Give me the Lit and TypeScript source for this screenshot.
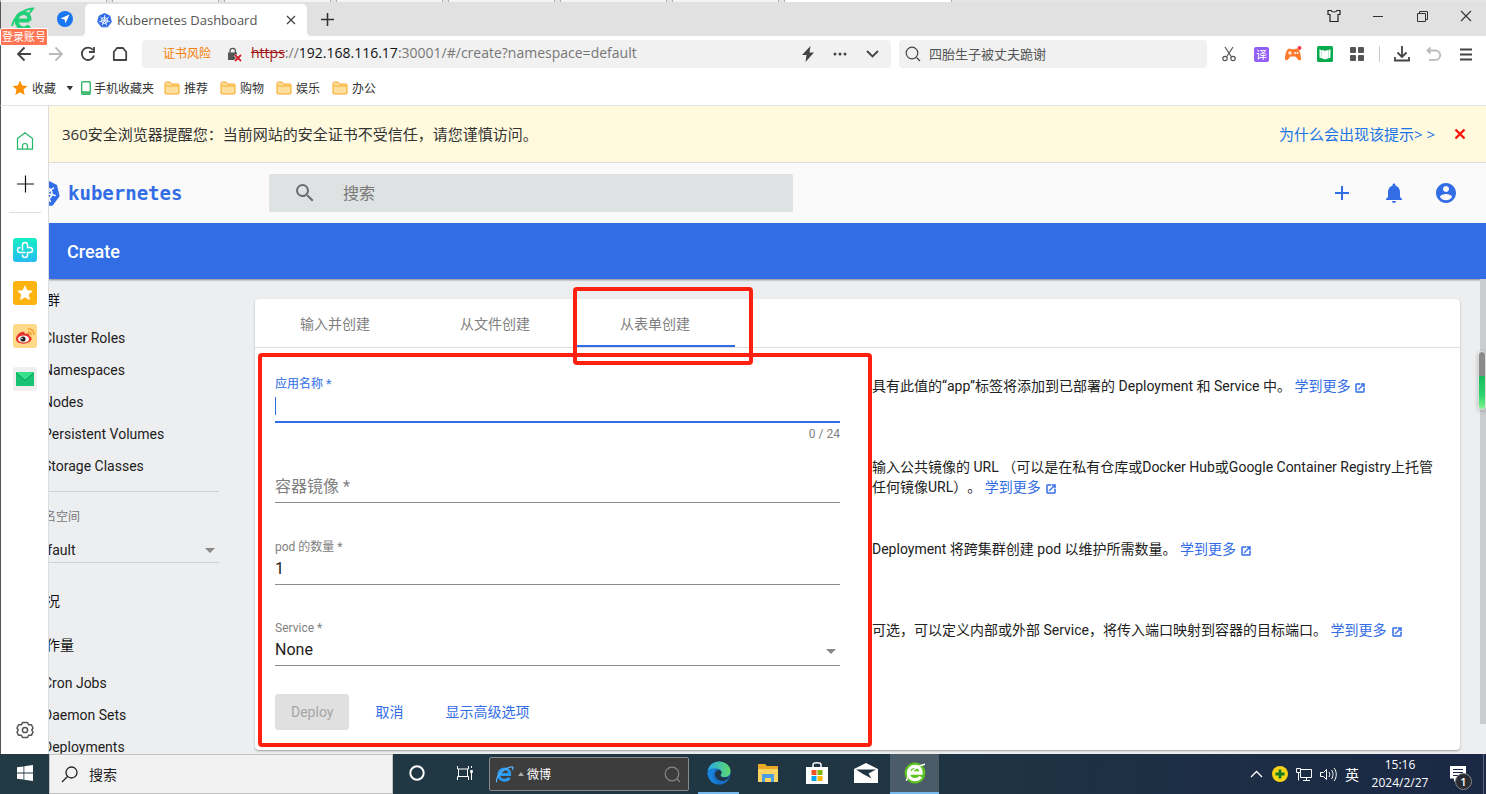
import { LitElement, html, css, svg } from "lit";
import { customElement, state } from "lit/decorators.js";
import { classMap } from "lit/directives/class-map.js";

const launchIcon = html`<svg class="launch" viewBox="2 2 20 20" width="10" height="10" fill="currentColor" stroke="currentColor" aria-hidden="true"><path d="M19 19H5V5h7V3H5a2 2 0 0 0-2 2v14a2 2 0 0 0 2 2h14c1.100 0 2-.9 2-2v-7h-2v7zM14 3v2h3.590l-9.830 9.830 1.410 1.410L19 6.410V10h2V3h-7z"/></svg>`;

const wheel = (body: string, line: string) => svg`
  <path fill=${body} d="M16 1 L27.500 6.500 L30.500 19 L22.500 29.500 H9.500 L1.500 19 L4.500 6.500 Z" stroke=${body} stroke-width="2" stroke-linejoin="round"/>
  <g fill="none" stroke=${line} stroke-width="1.800" stroke-linecap="round">
    <circle cx="16" cy="16" r="6.500"/><circle cx="16" cy="16" r="1.600"/>
    ${[0, 1, 2, 3, 4, 5, 6].map((i) => svg`<path d="M16 13.500V5.500" transform="rotate(${(i * 360) / 7} 16 16)"/>`)}
  </g>`;

const folder = html`<svg width="16" height="14" viewBox="0 0 16 14" aria-hidden="true"><path d="M1 2.500C1 1.500 1.500 1 2.500 1H6l1.500 2h6.500c.7 0 1 .4 1 1v8c0 .7-.3 1-1 1H2c-.7 0-1-.3-1-1z" fill="#ffdf9e" stroke="#f5a623"/><path d="M1.500 5h13" stroke="#f5a623"/></svg>`;

@customElement("browser-chrome")
class BrowserChrome extends LitElement {
  static styles = css`
    :host { display: block; flex: none; background: #fff; font-family: "Open Sans", "Noto Sans CJK SC", sans-serif; color: #333; }
    * { box-sizing: border-box; }
    button { border: 0; background: none; padding: 0; margin: 0; font: inherit; color: inherit; display: flex; align-items: center; justify-content: center; }
    svg { display: block; flex: none; }
    .behind { height: 2px; display: flex; gap: 5px; background: #e6e6e6; }
    .behind span { width: 107px; background: #f3f3f3; border: solid #aaa; border-width: 0 1px; }
    .behind .front { width: 168px; background: #fff; }
    .tabs { height: 34px; background: #e1e1e1; border-left: 1px solid #555; display: flex; position: relative; }
    .brand { width: 84px; display: flex; align-items: center; gap: 22px; padding-left: 10px; }
    .login { position: absolute; left: 0; top: 27px; z-index: 2; height: 16px; padding: 0 1px; background: #ff7452; border-radius: 1px; box-shadow: 0 0 0 1px #fff; color: #fff; font-size: 11px; line-height: 16px; }
    .tab { position: relative; width: 222px; margin-top: 2px; background: #fff; border-radius: 5px 5px 0 0; display: flex; align-items: center; padding: 0 11px 0 12px; gap: 5px; font-size: 13px; color: #555; }
    .tab::before, .tab::after { content: ""; position: absolute; bottom: 0; width: 4px; height: 4px; }
    .tab::before { left: -4px; background: radial-gradient(circle at 0 0, transparent 4px, #fff 4px); }
    .tab::after { right: -4px; background: radial-gradient(circle at 100% 0, transparent 4px, #fff 4px); }
    .tab .title { flex: 1; white-space: nowrap; }
    .plus { width: 40px; }
    .win { margin-left: auto; display: flex; height: 28px; margin-right: -2px; }
    .win button { width: 44px; }
    .bar { height: 36px; border-left: 1px solid #555; display: flex; align-items: center; padding-right: 4px; }
    .nav { display: flex; padding-left: 7px; width: 141px; }
    .nav button, .tools button { width: 32px; height: 28px; }
    .address { flex: 725 1 0; height: 28px; background: #f1f1f1; border-radius: 4px; display: flex; align-items: center; padding: 0 3px 0 21px; }
    .risk { font-size: 12px; line-height: 16px; padding-bottom: 1px; color: #f57c00; margin-right: 16px; }
    .url { font-size: 14px; color: #777; margin-left: 9px; flex: 1; white-space: nowrap; line-height: 18px; padding-bottom: 2px; }
    .url .bad { color: #a11212; text-decoration: line-through; }
    .url .host { color: #111; }
    .address button { width: 32px; height: 28px; }
    .find { flex: 302 1 0; margin-left: 8px; height: 28px; background: #f1f1f1; border-radius: 4px; display: flex; align-items: center; padding-left: 6px; gap: 8px; }
    .find input { border: 0; background: none; outline: 0; padding: 0 0 2px; flex: 1; min-width: 0; font: 13px "Open Sans", "Noto Sans CJK SC", sans-serif; color: #555; }
    .tools { display: flex; align-items: center; margin-left: 6px; }
    .sep { width: 1px; height: 16px; background: #ccc; margin: 0 6px; }
    .marks { height: 34px; border-left: 1px solid #555; border-bottom: 1px solid #e4e4e4; display: flex; align-items: center; padding: 0 0 1px 11px; font-size: 12px; color: #333; }
    .marks button { gap: 4px; }
    .marks .phone { gap: 3px; margin-left: 5px; margin-right: 10px; }
    .marks .dir { margin-right: 12px; }
    .marks .caret { margin-left: 6px; }
  `;

  private readonly folders = ["推荐", "购物", "娱乐", "办公"];

  render() {
    return html`
      <div class="behind">${[1, 2, 3, 4, 5, 6, 7].map(() => html`<span></span>`)}<span class="front"></span></div>
      <div class="tabs">
        <div class="brand">
          <svg width="24" height="24" viewBox="0 0 24 24"><path d="M6 13.500h12.500M18.500 13.500c.3-4.500-2-7.500-6-7.500S5.500 9.500 5.500 13.500s3 8 7 8c2.500 0 4.500-1 5.500-3" fill="none" stroke="#21cf77" stroke-width="4"/><path d="M1 19C3 10 12 2 22 1.500c-2 3-3 4.500-5 6" fill="none" stroke="#21cf77" stroke-width="2"/></svg>
          <svg width="16" height="16" viewBox="0 0 16 16"><circle cx="8" cy="8" r="8" fill="#1976f2"/><path d="M12.500 3.500 3.500 7.500l4 1 1 4z" fill="#fff"/></svg>
        </div>
        <button class="login">登录账号</button>
        <div class="tab">
          <svg width="15" height="15" viewBox="0 0 32 32">${wheel("#326ce5", "#fff")}</svg>
          <span class="title">Kubernetes Dashboard</span>
          <button aria-label="关闭标签"><svg width="10" height="10" viewBox="0 0 10 10"><path d="M1 1l8 8M9 1l-8 8" stroke="#444" stroke-width="1.300"/></svg></button>
        </div>
        <button class="plus" aria-label="新标签"><svg width="13" height="13" viewBox="0 0 13 13"><path d="M6.500 0v13M0 6.500h13" stroke="#333" stroke-width="1.600"/></svg></button>
        <div class="win">
          <button aria-label="皮肤"><svg width="14" height="14" viewBox="0 0 14 14"><path d="M4 1.500H1v4h2v7h8v-7h2v-4h-3C9 3.500 5 3.500 4 1.500z" fill="none" stroke="#222" stroke-width="1.200"/></svg></button>
          <button aria-label="最小化"><svg width="10" height="10"><path d="M0 5.500h10" stroke="#333"/></svg></button>
          <button aria-label="还原"><svg width="11" height="11" fill="none" stroke="#333"><path d="M.5 2.500h8v8h-8zM2.500 2.500v-2h8v8h-2"/></svg></button>
          <button aria-label="关闭"><svg width="12" height="12"><path d="M1 1l10 10M11 1 1 11" stroke="#333" stroke-width="1.100"/></svg></button>
        </div>
      </div>

      <div class="bar">
        <div class="nav">
          <button aria-label="后退"><svg width="16" height="16" fill="none" stroke="#444" stroke-width="1.800"><path d="M15 8H2M8.500 1.500 2 8l6.500 6.500"/></svg></button>
          <button aria-label="前进"><svg width="16" height="16" fill="none" stroke="#bbb" stroke-width="1.800"><path d="M1 8h13M7.500 1.500 14 8l-6.500 6.500"/></svg></button>
          <button aria-label="刷新"><svg width="16" height="16" fill="none" stroke="#444" stroke-width="1.800"><path d="M14 9.500A6.200 6.200 0 1 1 13 4M14 1v5H9"/></svg></button>
          <button aria-label="主页"><svg width="16" height="16" fill="none" stroke="#444" stroke-width="1.800"><path d="M1.800 6 5 2h6l3.200 4v8H1.800z" stroke-linejoin="round"/></svg></button>
        </div>
        <div class="address">
          <span class="risk">证书风险</span>
          <svg width="15" height="15" viewBox="0 0 15 15"><rect x="1" y="5.500" width="9" height="7.500" fill="#555"/><path d="M3 6V4a2.700 2.700 0 0 1 5.400 0v2" fill="none" stroke="#555" stroke-width="1.300"/><path d="M8 8l6 6M14 8l-6 6" stroke="#fff" stroke-width="3"/><path d="M8 8l6 6M14 8l-6 6" stroke="#d0202a" stroke-width="1.800"/></svg>
          <span class="url"><span class="bad">https</span>://<span class="host">192.168.116.17</span>:30001/#/create?namespace=default</span>
          <button aria-label="极速模式"><svg width="12" height="16" viewBox="0 0 12 16"><path d="M8.500 0 0 9h4.500L3.500 16 12 6.500H7.500z" fill="#444"/></svg></button>
          <button aria-label="更多"><svg width="14" height="4" fill="#444"><circle cx="2" cy="2" r="1.500"/><circle cx="7" cy="2" r="1.500"/><circle cx="12" cy="2" r="1.500"/></svg></button>
          <button aria-label="展开"><svg width="13" height="8" fill="none" stroke="#444" stroke-width="1.900"><path d="M1 1l5.500 5.500L12 1"/></svg></button>
        </div>
        <label class="find">
          <svg width="16" height="16" fill="none" stroke="#444" stroke-width="1.200"><circle cx="7" cy="7" r="5.800"/><path d="M11.500 11.500 15 15"/></svg>
          <input aria-label="网页搜索" value="四胎生子被丈夫跪谢">
        </label>
        <div class="tools">
          <button aria-label="截图"><svg width="14" height="16" fill="none" stroke="#555" stroke-width="1.200"><path d="M3 1l6.500 10M11 1 4.500 11"/><circle cx="3" cy="12.500" r="2.200"/><circle cx="11" cy="12.500" r="2.200"/></svg></button>
          <button aria-label="翻译"><svg width="15" height="15"><rect width="15" height="15" rx="2" fill="#9360f7"/><text x="2" y="12" font-size="11" fill="#fff">译</text></svg></button>
          <button aria-label="游戏"><svg width="18" height="16"><path d="M4 3c1.500-1.200 2.500-.3 3 .2h4c.5-.5 1.500-1.400 3-.2 1.800 1.500 3 6 3 10 0 2-2.500 1.500-3.500 0-1-1.600-1.500-2.500-2.500-2.500H7c-1 0-1.500 1-2.500 2.500C3.500 14.500 1 15 1 13 1 9 2.200 4.500 4 3z" fill="#ff7a2b"/><path d="M6 5v4M4 7h4" stroke="#fff" stroke-width="1.200"/><circle cx="11" cy="7" r="1" fill="#fff"/><circle cx="13.500" cy="7" r="1" fill="#fff"/><circle cx="15.500" cy="2" r="2" fill="#f43a4a"/></svg></button>
          <button aria-label="小说"><svg width="16" height="16"><rect width="16" height="16" rx="1.500" fill="#06a94d"/><path d="M2.500 3l2 1.500L6 4l2 1 2-1 1.500.5 2-1.500v8.500L8 13.500l-5.500-2z" fill="#fff"/><path d="M4.500 4.500v7M11.500 4.500v7" stroke="#b8ead0"/></svg></button>
          <button aria-label="应用"><svg width="14" height="14" fill="#555"><rect width="6" height="6" rx="1"/><rect x="8" width="6" height="6" rx="1"/><rect y="8" width="6" height="6" rx="1"/><rect x="8" y="8" width="6" height="6" rx="1"/></svg></button>
          <span class="sep"></span>
          <button aria-label="下载"><svg width="16" height="16" fill="none" stroke="#444" stroke-width="1.800"><path d="M8 0v11M3.500 6.500 8 11l4.500-4.500M1 11v3.500h14V11"/></svg></button>
          <button aria-label="撤销"><svg width="16" height="16" fill="none" stroke="#bbb" stroke-width="1.800"><path d="M4.500 1.500 1.500 4.500l3 3M1.500 4.500h8a4.700 4.700 0 0 1 0 9.400H3"/></svg></button>
          <button aria-label="菜单"><svg width="12" height="13" stroke="#444" stroke-width="1.800"><path d="M0 1.500h12M0 6.500h12M0 11.500h12"/></svg></button>
        </div>
      </div>

      <div class="marks">
        <button><svg width="16" height="16" viewBox="0 0 16 16"><path d="M8 .5l2.200 5 5.300.5-4 3.600 1.200 5.400L8 12.200 3.300 15l1.200-5.400-4-3.600 5.300-.5z" fill="#ff9100"/></svg>收藏</button>
        <button class="caret" aria-label="收藏菜单"><svg width="14" height="5"><path d="M4.500 0h6.500L8 4.500z" fill="#333"/></svg></button>
        <button class="phone"><svg width="10" height="14"><rect x=".7" y=".7" width="8.600" height="12.600" rx="1" fill="#fff" stroke="#39b86b" stroke-width="1.400"/><path d="M1 11.500h8" stroke="#39b86b" stroke-width="2.500"/></svg>手机收藏夹</button>
        ${this.folders.map((f) => html`<button class="dir">${folder}${f}</button>`)}
      </div>
    `;
  }
}

@customElement("side-rail")
class SideRail extends LitElement {
  static styles = css`
    :host { flex: none; display: flex; flex-direction: column; align-items: center; width: 49px; box-sizing: border-box; background: #fff; border-left: 1px solid #555; border-right: 1px solid #dcdcdc; padding: 23px 0 12px; }
    button { border: 0; background: none; padding: 0; margin: 0 0 19px; width: 24px; height: 24px; }
    svg { display: block; }
    hr { width: 32px; border: 0; border-top: 1px solid #ddd; margin: -3px 0 25px; }
    .gear { margin: auto 0 0; }
  `;
  render() {
    return html`
      <button aria-label="主页"><svg width="24" height="24" fill="none" stroke="#21b866" stroke-width="1.200"><path d="M4.500 9.500 12 3.800l7.500 5.700v10.700h-15zM9.500 20v-3a2.500 2.500 0 0 1 5 0v3"/></svg></button>
      <button aria-label="添加"><svg width="24" height="24" stroke="#111" stroke-width="1.200"><path d="M12.500 3.500v17M4 12h17"/></svg></button>
      <hr>
      <button aria-label="健康"><svg width="24" height="24"><defs><linearGradient id="g" x2="0" y2="1"><stop stop-color="#15eec4"/><stop offset="1" stop-color="#25bdf0"/></linearGradient></defs><rect width="24" height="24" rx="3" fill="url(#g)"/><path d="M9.500 12.500V7a2.500 2.500 0 0 1 5 0v2.500H17a2.500 2.500 0 0 1 0 5h-2.500V17a2.500 2.500 0 0 1-5 0v-.5M12.500 14.500H7a2.500 2.500 0 0 1 0-5h.5" fill="none" stroke="#fff" stroke-width="1.500"/></svg></button>
      <button aria-label="收藏"><svg width="24" height="24"><rect width="24" height="24" rx="3" fill="#ffb30f"/><path d="M12 4l2.300 5.300 5.700.5-4.300 3.800 1.300 5.700-5-3-5 3 1.300-5.700L4 9.800l5.700-.5z" fill="#fff"/></svg></button>
      <button aria-label="微博"><svg width="24" height="24"><rect width="24" height="24" rx="3" fill="#ffd98a"/><path d="M3 15c0-4 5-8.500 8-7 1 .5.800 1.500.8 2 3-1 5.200-.2 4.400 2 2.500.8 3 2.500 2 4.200C15 21 3 21 3 15z" fill="#e6322b"/><ellipse cx="10.500" cy="15" rx="5.500" ry="3.600" fill="#fff"/><circle cx="10" cy="15" r="2.600" fill="#222"/><circle cx="9" cy="14.500" r=".8" fill="#fff"/><path d="M15 8.200c2-.3 3.300 1 3 3M15 5c4-.5 6.500 2.500 5.800 6" fill="none" stroke="#f5a02c" stroke-width="1.600"/></svg></button>
      <button aria-label="邮件"><svg width="24" height="24"><rect width="24" height="24" rx="3" fill="#efefef"/><rect x="3" y="5" width="18" height="14" fill="#17c272"/><path d="M3 5h18l-9 8z" fill="#37e08a"/><path d="M3 6l9 7.500L21 6" fill="none" stroke="#0b9a57"/></svg></button>
      <button class="gear" aria-label="设置"><svg width="24" height="24" fill="none" stroke="#555" stroke-width="1.500"><path d="M9.500 4.500h5l1.200 2.300h2.800L20 10l-1.200 2 1.200 2.200-1.500 3h-2.800l-1.200 2.300h-5l-1.200-2.300H5.500l-1.500-3L5.200 12 4 10l1.500-3.200h2.800z" stroke-linejoin="round"/><circle cx="12" cy="12" r="2.600"/></svg></button>
    `;
  }
}

@customElement("kube-dashboard")
class KubeDashboard extends LitElement {
  static styles = css`
    :host { flex: 1; min-width: 0; display: flex; flex-direction: column; overflow: hidden; background: #edeef0; font-family: Roboto, "Noto Sans CJK SC", sans-serif; font-size: 14px; color: #212121; }
    * { box-sizing: border-box; }
    button { border: 0; background: none; padding: 0; margin: 0; font: inherit; color: inherit; }
    svg { display: block; flex: none; }
    a { color: #326de6; text-decoration: none; }
    .warning { flex: none; height: 57px; background: #fff9dd; border-bottom: 1px solid #dcdcdc; display: flex; align-items: center; padding: 0 20px 0 13px; font: 15px "Open Sans", "Noto Sans CJK SC", sans-serif; color: #333; }
    .warning span, .warning a { padding-bottom: 2px; }
    .warning a { margin-left: auto; margin-right: 19px; color: #1a73e8; }
    header { flex: none; height: 60px; background: #fafafa; display: flex; align-items: center; padding-right: 28px; color: #326de6; }
    .logo { width: 220px; display: flex; align-items: center; gap: 8px; font: bold 19px "DejaVu Sans Mono", monospace; }
    .logo svg { margin-left: -16px; }
    .search { width: 524px; height: 38px; background: #dfe2e3; display: flex; align-items: center; gap: 26px; padding-left: 24px; color: #6a6d70; border-radius: 2px; }
    .search input { border: 0; outline: 0; background: none; padding: 0; flex: 1; min-width: 0; font: 16px Roboto, "Noto Sans CJK SC", sans-serif; color: #555; }
    .search input::placeholder { color: #777; opacity: 1; }
    .actions { margin-left: auto; display: flex; gap: 28px; }
    .crumb { flex: none; height: 56px; background: #326de6; color: #fff; font-size: 18px; font-weight: 500; line-height: 58px; padding-left: 18px; box-shadow: 0 1px 2px rgba(0, 0, 0, .45); position: relative; }
    .crumb h1 { font: inherit; margin: 0; }
    .body { flex: 1; min-height: 0; display: flex; overflow: hidden; position: relative; }
    nav { width: 206px; flex: none; padding-right: 36px; margin-top: -1px; }
    .inner { margin-left: -17px; }
    nav h2 { margin: 0; height: 44px; line-height: 44px; font-size: 14px; font-weight: 400; color: #111; }
    nav .link { display: block; height: 32px; line-height: 32px; padding-left: 11px; color: #1c1c1c; white-space: nowrap; }
    .ns { border-top: 1px solid #cfd0d2; margin: 9px 0 16px; padding-top: 17px; }
    .ns label { display: block; font-size: 12px; line-height: 16px; color: #777; }
    .pick { position: relative; margin-top: 12px; border-bottom: 1px solid #cfd0d2; }
    .pick svg, .field svg { position: absolute; right: 4px; top: 11px; fill: #888; pointer-events: none; }
    select, .field input { appearance: none; display: block; width: 100%; border: 0; outline: 0; border-radius: 0; background: none; padding: 0; margin: 0; font: inherit; color: inherit; }
    select { height: 26px; }
    .pick select { height: 25px; }
    .card { flex: 1; min-width: 0; align-self: flex-start; margin: 20px 26px 4px 0; background: #fff; border-radius: 4px; box-shadow: 0 1px 2px rgba(0, 0, 0, .35); }
    .tabs { display: flex; height: 49px; border-bottom: 1px solid #dfdfdf; }
    .tabs button { position: relative; width: 160px; padding-top: 2px; color: #808080; border-bottom: 2px solid transparent; }
    .tabs .on { border-color: #326de6; }
    .mark { position: absolute; border: 4px solid #ff2010; border-radius: 4px; pointer-events: none; z-index: 1; }
    .tab-mark { inset: -12px -18px -20px -2px; }
    .form-mark { inset: 5px calc(50% - 14px) 3px 3px; }
    form { position: relative; padding: 16px 23px 20px 20px; margin: 0; }
    .row { display: grid; grid-template-columns: 1fr 1fr; column-gap: 32px; min-height: 81px; }
    .row + .row { min-height: 82px; }
    .row + .row + .row { min-height: 81px; }
    .row p { margin: 12px 0 0; line-height: 20px; text-spacing-trim: space-all; }
    .row a { white-space: nowrap; }
    .launch { display: inline-block; vertical-align: -2px; margin-left: 5px; }
    .field { position: relative; padding-top: 11px; }
    .field label { display: block; font-size: 12px; line-height: 18px; color: #808080; }
    .field .line { position: relative; margin-top: 1px; height: 28px; border-bottom: 1px solid #8c8c8c; font-size: 16px; }
    .field .line input, .field .line select { height: 22px; }
    .focus label { color: #4c80ea; font-weight: 500; }
    .focus .line { height: 29px; border-bottom: 2px solid #326de6; }
    .focus .line::before { content: ""; position: absolute; left: 0; top: 3px; width: 1px; height: 18px; background: #326de6; }
    .empty label { position: absolute; left: 0; top: 31px; font-size: 16px; line-height: 22px; }
    .empty .line { margin-top: 19px; }
    .count { font-size: 12px; line-height: 14px; margin-top: 4px; text-align: right; color: #808080; }
    .buttons { display: flex; gap: 10px; margin-top: 5px; }
    .buttons button { height: 36px; padding: 0 16px 2px; border-radius: 3px; color: #326de6; }
    .buttons .off { background: #e0e0e0; color: #a6a6a6; padding-bottom: 0; }
    .scroll { position: absolute; right: 0; top: 0; width: 6px; height: 445px; background: #cbcccd; }
    .ball { position: absolute; right: 0; top: 72px; width: 8px; height: 59px; border: 1px solid #ddd; border-radius: 4px; background: linear-gradient(#8a8a8a 24px, #17bd5b 24px, #2dd36e 75%, #7cf58a); box-shadow: 0 1px 4px rgba(0, 0, 0, .25); }
  `;

  @state() private active = 2;

  private readonly tabs = ["输入并创建", "从文件创建", "从表单创建"];
  private readonly cluster = ["Cluster Roles", "Namespaces", "Nodes", "Persistent Volumes", "Storage Classes"];
  private readonly workloads = ["Cron Jobs", "Daemon Sets", "Deployments"];

  private link(name: string) {
    return html`<a class="link" href="#">${name}</a>`;
  }

  private more() {
    return html`<a href="#">学到更多${launchIcon}</a>`;
  }

  render() {
    const arrow = html`<svg width="10" height="5"><path d="M0 0h10L5 5z"/></svg>`;
    return html`
      <div class="warning">
        <span>360安全浏览器提醒您：当前网站的安全证书不受信任，请您谨慎访问。</span>
        <a href="#">为什么会出现该提示&gt; &gt;</a>
        <button aria-label="关闭提示"><svg width="12" height="12"><path d="M1.500 1.500l9 9M10.500 1.500l-9 9" stroke="#f5160c" stroke-width="2.400"/></svg></button>
      </div>
      <header>
        <div class="logo"><svg width="27" height="27" viewBox="0 0 32 32">${wheel("#326de6", "#fff")}</svg>kubernetes</div>
        <label class="search">
          <svg width="24" height="24" viewBox="0 0 24 24" fill="currentColor"><path d="M15.500 14h-.79l-.28-.27A6.470 6.470 0 0 0 16 9.500 6.500 6.500 0 1 0 9.500 16c1.610 0 3.090-.59 4.230-1.570l.27.28v.79l5 4.990L20.490 19l-4.990-5zm-6 0C7.010 14 5 11.990 5 9.500S7.010 5 9.500 5 14 7.010 14 9.500 11.990 14 9.500 14z"/></svg>
          <input placeholder="搜索" aria-label="搜索">
        </label>
        <div class="actions">
          <button aria-label="创建"><svg width="24" height="24" fill="currentColor"><path d="M19 13h-6v6h-2v-6H5v-2h6V5h2v6h6v2z"/></svg></button>
          <button aria-label="通知"><svg width="24" height="24" fill="currentColor"><path d="M12 22c1.100 0 2-.9 2-2h-4a2 2 0 0 0 2 2zm6-6v-5c0-3.070-1.640-5.640-4.500-6.320V4c0-.83-.67-1.500-1.500-1.500s-1.500.67-1.500 1.500v.68C7.630 5.360 6 7.920 6 11v5l-2 2v1h16v-1l-2-2z"/></svg></button>
          <button aria-label="用户"><svg width="24" height="24" fill="currentColor"><path d="M12 2C6.480 2 2 6.480 2 12s4.480 10 10 10 10-4.480 10-10S17.520 2 12 2zm0 3c1.660 0 3 1.340 3 3s-1.340 3-3 3-3-1.340-3-3 1.340-3 3-3zm0 14.200a7.200 7.200 0 0 1-6-3.220c.03-1.990 4-3.080 6-3.080 1.990 0 5.970 1.090 6 3.080a7.200 7.200 0 0 1-6 3.220z"/></svg></button>
        </div>
      </header>
      <div class="crumb"><h1>Create</h1></div>
      <div class="body">
        <nav>
          <div class="inner">
            <h2>集群</h2>
            ${this.cluster.map((n) => this.link(n))}
            <div class="ns">
              <label for="ns">命名空间</label>
              <div class="pick"><select id="ns"><option>default</option></select>${arrow}</div>
            </div>
            <h2>概况</h2>
            <h2>工作量</h2>
            ${this.workloads.map((n) => this.link(n))}
          </div>
        </nav>
        <main class="card">
          <div class="tabs">
            ${this.tabs.map((t, i) => html`<button class=${classMap({ on: i === this.active })} @click=${() => (this.active = i)}>${t}${i === 2 ? html`<span class="mark tab-mark"></span>` : ""}</button>`)}
          </div>
          <form>
            <span class="mark form-mark"></span>
            <div class="row">
              <div class="field focus"><label for="app">应用名称 *</label><div class="line"><input id="app" maxlength="24"></div><div class="count">0 / 24</div></div>
              <p>具有此值的“app”标签将添加到已部署的 Deployment 和 Service 中。 ${this.more()}</p>
            </div>
            <div class="row">
              <div class="field empty"><label for="image">容器镜像 *</label><div class="line"><input id="image"></div></div>
              <p>输入公共镜像的 URL （可以是在私有仓库或Docker Hub或Google Container Registry上托管任何镜像URL）。 ${this.more()}</p>
            </div>
            <div class="row">
              <div class="field"><label for="pods">pod 的数量 *</label><div class="line"><input id="pods" value="1"></div></div>
              <p>Deployment 将跨集群创建 pod 以维护所需数量。 ${this.more()}</p>
            </div>
            <div class="row">
              <div class="field"><label for="svc">Service *</label><div class="line"><select id="svc"><option>None</option></select>${arrow}</div></div>
              <p>可选，可以定义内部或外部 Service，将传入端口映射到容器的目标端口。 ${this.more()}</p>
            </div>
            <div class="buttons">
              <button type="button" class="off" disabled>Deploy</button>
              <button type="button">取消</button>
              <button type="button">显示高级选项</button>
            </div>
          </form>
        </main>
        <span class="scroll"></span>
        <span class="ball"></span>
      </div>
    `;
  }
}

@customElement("task-bar")
class TaskBar extends LitElement {
  static styles = css`
    :host { flex: none; display: flex; height: 40px; background: linear-gradient(90deg, #213a44, #1f3543 60%, #1b2845); color: #fff; font: 12px "Open Sans", "Noto Sans CJK SC", sans-serif; }
    * { box-sizing: border-box; }
    button { border: 0; border-bottom: 2px solid transparent; background: none; padding: 0; margin: 0; width: 49px; font: inherit; color: inherit; display: flex; align-items: center; justify-content: center; }
    svg { display: block; flex: none; }
    input { border: 0; outline: 0; background: none; padding: 0; flex: 1; min-width: 0; font: inherit; color: inherit; }
    input::placeholder { color: inherit; opacity: 1; }
    .search { width: 344px; background: #f2f2f2; border: 1px solid #c4c4c4; color: #222; display: flex; align-items: center; gap: 11px; padding-left: 11px; font-size: 14px; }
    .cortana, .views { width: 48px; }
    .quick { width: 200px; height: 34px; margin: 3px 5px 0 0; background: #3d3d3d; border: 1px solid #8a8a8a; border-radius: 2px; display: flex; align-items: center; padding: 0 7px 0 5px; gap: 4px; }
    .quick input { margin-left: -1px; }
    .open { border-bottom-color: #76b9ed; }
    .edge-app { width: 41px; margin: 0 4px; }
    .current { background: #4b5c68; }
    .tray { margin-left: auto; display: flex; align-items: center; }
    .tray button { width: 24px; height: 40px; border: 0; }
    .tray .lang { font-size: 14px; }
    .tray .clock { width: 72px; flex-direction: column; line-height: 18px; }
    .tray .note { position: relative; width: 45px; }
    .badge { position: absolute; right: 9px; bottom: 4px; width: 17px; height: 17px; border: 1px solid #888; border-radius: 50%; background: #2a2c33; font-size: 11px; line-height: 15px; font-weight: 600; }
    .edge { width: 1px; height: 40px; background: #5a6478; margin: 0 2px; }
  `;
  render() {
    const e = (c: string) => svg`<path d="M4.500 10h11c.2-3.500-2-6-5.500-6s-6 2.700-6 6.200S6.500 16 10 16c2.500 0 4.200-.9 5.200-2.600" fill="none" stroke=${c} stroke-width="3"/>`;
    return html`
      <button aria-label="开始"><svg width="16" height="16" fill="#fff"><path d="M0 2.300 6.500 1.400v6.200H0zM7.300 1.300 16 0v7.600H7.300zM0 8.400h6.500v6.200L0 13.700zM7.300 8.400H16V16l-8.700-1.300z"/></svg></button>
      <label class="search"><svg width="17" height="17" fill="none" stroke="#222" stroke-width="1.300"><circle cx="10.500" cy="6.500" r="5.500"/><path d="M6.500 10.500 1 16"/></svg><input placeholder="搜索" aria-label="搜索"></label>
      <button class="cortana" aria-label="Cortana"><svg width="16" height="16"><circle cx="8" cy="8" r="6.700" fill="none" stroke="#fff" stroke-width="2"/></svg></button>
      <button class="views" aria-label="任务视图"><svg width="17" height="16" fill="none" stroke="#fff"><path d="M.5 1v3h11V1M1.500 4v7M10.500 4v7M.5 15v-3.500h11V15M14.500 6v9M14.500 1v2"/><path d="M14.500 5v3" stroke-width="2.500"/></svg></button>
      <label class="quick"><svg width="19" height="19" viewBox="0 0 20 20">${e("#2b9af3")}<path d="M2 18C0 14 8 3 18 2c1.500 0 1 2 0 3" fill="none" stroke="#58b5ff" stroke-width="1.300"/></svg><svg width="6" height="4"><path d="M0 4h6L3 0z" fill="#aaa"/></svg><input value="微博" aria-label="快捷搜索"><svg width="17" height="17" fill="none" stroke="#888" stroke-width="1.200"><circle cx="8" cy="8" r="6.800"/><path d="M13 13l3 3"/></svg></label>
      <button class="open edge-app" aria-label="Edge"><svg width="24" height="24" viewBox="0 0 24 24"><defs><linearGradient id="t" x2="1"><stop stop-color="#28a8e8"/><stop offset="1" stop-color="#5fdb6b"/></linearGradient></defs><circle cx="12" cy="12" r="11.500" fill="#1670c8"/><path d="M.6 11C1.500 4.500 6 .5 12 .5c7 0 11.500 5 11.500 9.500 0 4-3 6-6 6s-4-1-4-1.800c0-.6 1-1 1-2.700C14.500 9 12 7.500 8.500 7.500 4 7.500 1 9 .6 11z" fill="url(#t)"/><path d="M8 13c0-2.500 2-4 4-4 1.500 0 2.500 1 2.500 2.500 0 1.700-1 2.100-1 2.700 0 .8 1.500 2.300 4 2.300 2 0 4-.7 5-2-1 3-4 5.500-6.500 5.500C11 20 8 17 8 13z" fill="#1f3543"/><path d="M8.500 8.500C5 11 4 18 10 23 5 22 .5 18 .5 12c1-3 4.500-4.500 8-3.500z" fill="#1a84dc"/></svg></button>
      <button aria-label="文件资源管理器"><svg width="22" height="20"><path d="M1 1h7l2 2h11v16H1z" fill="#e9a825"/><path d="M1 6h20v13H1z" fill="#fbd463"/><path d="M5 11h12v8h-3v-4H8v4H5z" fill="#4a9fe0"/></svg></button>
      <button aria-label="应用商店"><svg width="22" height="24"><path d="M7 6V3.500C7 1 15 1 15 3.500V6" fill="none" stroke="#fff" stroke-width="1.500"/><path d="M0 6h22v17H0z" fill="#fff"/><path d="M5.500 9h5v5h-5z" fill="#f25022"/><path d="M11.500 9h5v5h-5z" fill="#7fba00"/><path d="M5.500 15h5v5h-5z" fill="#00a4ef"/><path d="M11.500 15h5v5h-5z" fill="#ffb900"/></svg></button>
      <button aria-label="邮件"><svg width="24" height="20"><path d="M0 6 12 0l12 6v14H0z" fill="#fff"/><path d="M2 6.500h20l-7.500 4 3 5L9 11z" fill="#1f3543"/></svg></button>
      <button class="open current" aria-label="360安全浏览器"><svg width="22" height="22" viewBox="0 0 20 20"><circle cx="10" cy="10" r="9.500" fill="#5cc31f"/>${e("#fff")}<path d="M2 17C4 11 10 4 19 2" fill="none" stroke="#fff" stroke-width="1.300"/></svg></button>
      <div class="tray">
        <button aria-label="显示隐藏的图标"><svg width="13" height="8" fill="none" stroke="#fff" stroke-width="1.300"><path d="M1 7l5.500-5.500L12 7"/></svg></button>
        <button aria-label="安全卫士"><svg width="16" height="16"><circle cx="8" cy="8" r="8" fill="#f7d414"/><path d="M8 3.500v9M3.500 8h9" stroke="#157a26" stroke-width="2.800"/></svg></button>
        <button aria-label="网络"><svg width="17" height="15" fill="none" stroke="#fff"><path d="M5 2.500h10.500v8H4.500V6M.5 1.500h4v4h-4zM2.500 5.500v8M7 13.500h7M10.500 11v2.500"/></svg></button>
        <button aria-label="音量"><svg width="17" height="15" fill="none" stroke="#fff"><path d="M.5 5.500h3l3-3v10l-3-3h-3zM9 5c1 1.500 1 3.500 0 5M11.500 3c2 2.500 2 6.500 0 9M14 1c3 3.500 3 9.500 0 13"/></svg></button>
        <button class="lang">英</button>
        <button class="clock"><span>15:16</span><span>2024/2/27</span></button>
        <button class="note" aria-label="通知"><svg width="18" height="17"><path d="M0 0h16v12.500H7L4 16v-3.500H0z" fill="#fff"/><path d="M3 3.500h10M3 6.500h10M3 9.500h7" stroke="#1b2845" stroke-width="1.200"/></svg><span class="badge">1</span></button>
        <span class="edge"></span>
      </div>
    `;
  }
}

@customElement("app-root")
class AppRoot extends LitElement {
  static styles = css`
    :host { display: flex; flex-direction: column; height: 100vh; overflow: hidden; }
    .middle { flex: 1; min-height: 0; display: flex; }
  `;
  render() {
    return html`
      <browser-chrome></browser-chrome>
      <div class="middle"><side-rail></side-rail><kube-dashboard></kube-dashboard></div>
      <task-bar></task-bar>
    `;
  }
}
